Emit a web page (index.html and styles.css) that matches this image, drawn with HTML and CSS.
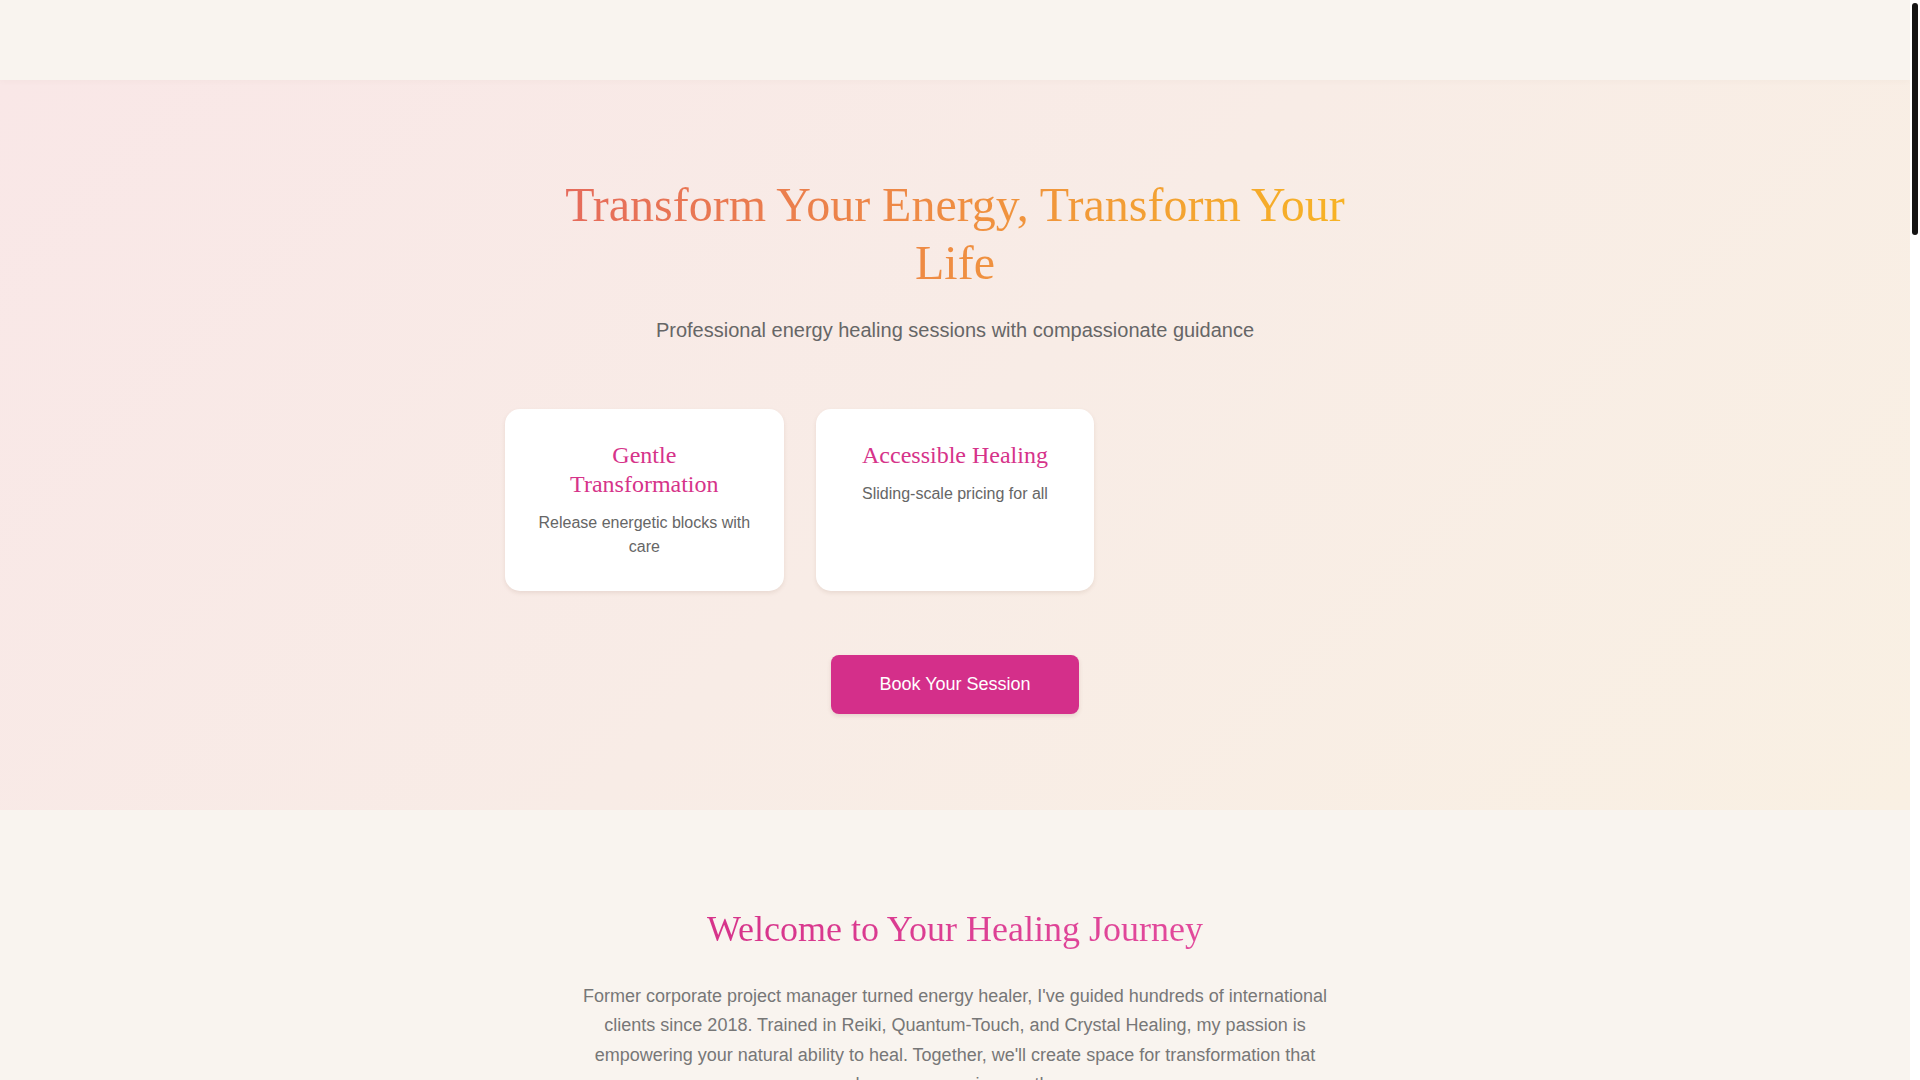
FILE: index.html
```html
<!DOCTYPE html>
<html lang="en">
<head>
<meta charset="utf-8">
<title>Energy Healing</title>
<link rel="stylesheet" href="styles.css">
</head>
<body>
<div class="page">
<header class="site-header"></header>

<section class="hero">
  <div class="hero-inner">
    <h1 class="hero-title">Transform Your Energy, Transform Your Life</h1>
    <p class="hero-sub">Professional energy healing sessions with compassionate guidance</p>
    <div class="features">
      <div class="card">
        <h3 class="card-title">Gentle Transformation</h3>
        <p class="card-text">Release energetic blocks with care</p>
      </div>
      <div class="card">
        <h3 class="card-title">Accessible Healing</h3>
        <p class="card-text">Sliding-scale pricing for all</p>
      </div>
    </div>
    <a class="btn" href="#book">Book Your Session</a>
  </div>
</section>

<section class="about">
  <h2 class="section-title">Welcome to Your Healing Journey</h2>
  <p class="about-text">Former corporate project manager turned energy healer, I've guided hundreds of international clients since 2018. Trained in Reiki, Quantum-Touch, and Crystal Healing, my passion is empowering your natural ability to heal. Together, we'll create space for transformation that honors your unique path.</p>
</section>

<section class="services">
  <h2 class="section-title">Healing Services</h2>
  <div class="service-list">
    <div class="card"><h3 class="card-title">Reiki Session</h3><p class="card-text">A gentle, restorative session to balance your energy centers.</p></div>
    <div class="card"><h3 class="card-title">Quantum-Touch</h3><p class="card-text">Focused life-force energy work to support natural healing.</p></div>
    <div class="card"><h3 class="card-title">Crystal Healing</h3><p class="card-text">Harness the vibrations of crystals for clarity and calm.</p></div>
  </div>
</section>

<section class="testimonials">
  <h2 class="section-title">Client Stories</h2>
  <p class="about-text">"I felt lighter and more at peace after just one session." — Maria</p>
  <p class="about-text">"A compassionate healer who truly listens." — James</p>
</section>

<section class="contact" id="book">
  <h2 class="section-title">Book Your Session</h2>
  <p class="about-text">Sessions are available online and in person. Reach out to begin your journey.</p>
</section>

<footer class="site-footer">© 2024 Energy Healing</footer>
</div>
<div class="scrollbar" aria-hidden="true"><div class="scroll-thumb"></div></div>
</body>
</html>
```
FILE: styles.css
```css
html, body {
  margin: 0;
  height: 100%;
  overflow: hidden;
  background: #ffffff;
}
body {
  display: flex;
  font-family: "Liberation Sans", Arial, sans-serif;
  color: #666;
}
.page {
  flex: 1;
  min-width: 0;
  height: 100vh;
  overflow: hidden;
  background: #f9f4ef;
}
.scrollbar {
  width: 10px;
  flex: none;
  height: 100vh;
  background: #ffffff;
  padding: 3px 2px 0;
  box-sizing: border-box;
}
.scroll-thumb {
  height: 232px;
  background: #141414;
  border-radius: 3px;
}

.site-header {
  height: 80px;
  background: #f9f4ef;
  box-shadow: 0 1px 6px rgba(120, 90, 70, 0.04);
  position: relative;
  z-index: 1;
}

.hero {
  padding: 96px 20px;
  text-align: center;
  background: linear-gradient(135deg, #f9e7e7 0%, #f8ece6 50%, #f9f0e3 100%);
}
.hero-inner { max-width: 900px; margin: 0 auto; }

.hero-title {
  max-width: 800px;
  margin: 0 auto 24px;
  font-family: "Liberation Serif", "Times New Roman", serif;
  font-weight: normal;
  font-size: 48px;
  line-height: 1.2;
  background: linear-gradient(90deg, #e56a5c 0%, #ee8a45 45%, #f7b424 100%);
  -webkit-background-clip: text;
  background-clip: text;
  color: transparent;
}
.hero-sub {
  margin: 0 0 64px;
  font-size: 20px;
  line-height: 1.5;
  color: #666;
}

.features {
  display: grid;
  grid-template-columns: repeat(3, 1fr);
  gap: 32px;
  margin-bottom: 64px;
}
.card {
  background: #ffffff;
  border-radius: 15px;
  padding: 32px;
  box-shadow: 0 2px 4px rgba(120, 80, 60, 0.12);
  text-align: center;
}
.card-title {
  margin: 0 0 12px;
  font-family: "Liberation Serif", "Times New Roman", serif;
  font-weight: normal;
  font-size: 24px;
  line-height: 1.2;
  color: #d6338a;
}
.card-text {
  margin: 0;
  font-size: 16px;
  line-height: 1.5;
  color: #666;
}

.btn {
  display: inline-block;
  padding: 16px 48px;
  font-size: 18px;
  line-height: 1.5;
  color: #ffffff;
  background: #d42f8a;
  border-radius: 8px;
  text-decoration: none;
  box-shadow: 0 2px 4px rgba(120, 60, 60, 0.15);
}

.about, .services, .testimonials, .contact {
  padding: 96px 20px;
  text-align: center;
  background: #f9f4ef;
}
.about { padding-top: 98px; }
.section-title {
  margin: 0 0 31px;
  font-family: "Liberation Serif", "Times New Roman", serif;
  font-weight: normal;
  font-size: 36px;
  line-height: 1.2;
  background: linear-gradient(90deg, #d6338a 0%, #e24a9c 100%);
  -webkit-background-clip: text;
  background-clip: text;
  color: transparent;
  display: inline-block;
}
.about-text {
  max-width: 760px;
  margin: 0 auto;
  font-size: 18px;
  line-height: 1.63;
  color: #777;
}
.services { padding-bottom: 400px; }
.service-list {
  max-width: 900px;
  margin: 0 auto;
  display: grid;
  grid-template-columns: repeat(3, 1fr);
  gap: 32px;
}
.testimonials { padding-bottom: 600px; }
.testimonials .about-text { margin-bottom: 24px; }
.contact { padding-bottom: 1800px; }
.site-footer {
  padding: 40px 20px;
  text-align: center;
  font-size: 14px;
  color: #999;
}
```
